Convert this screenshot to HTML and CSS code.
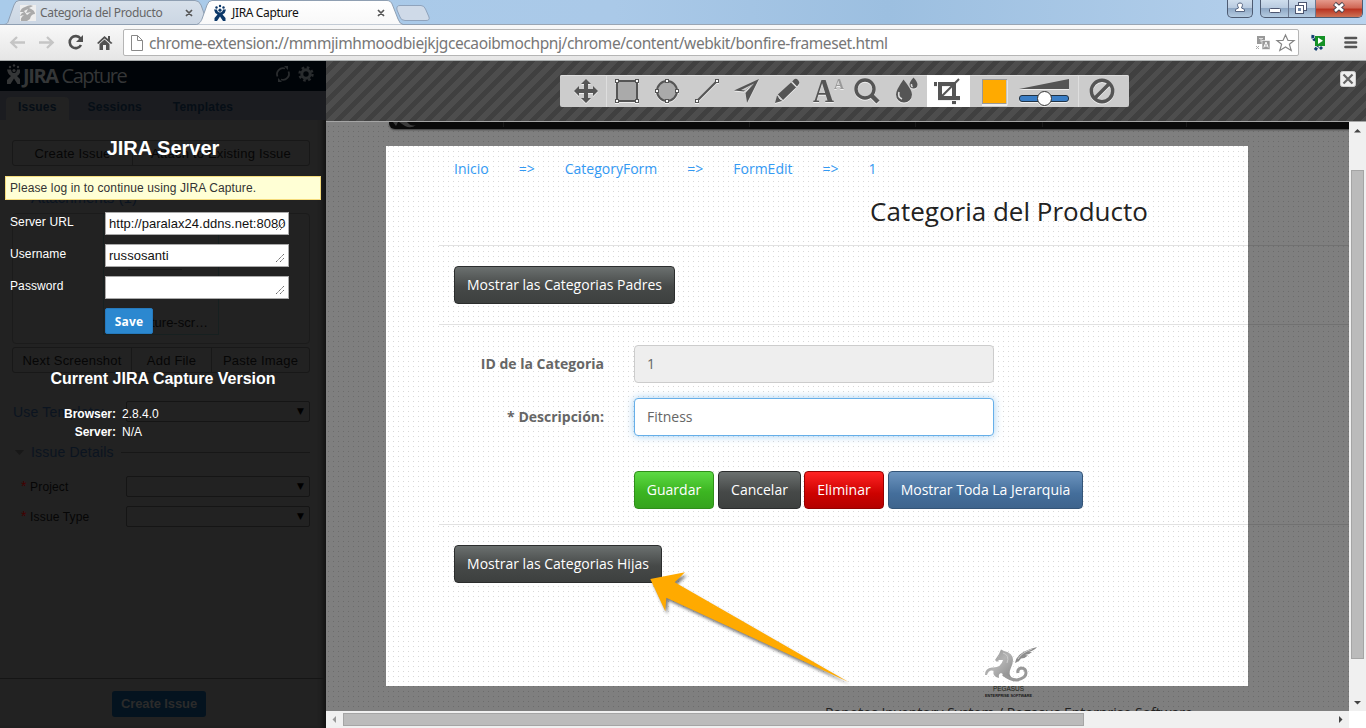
FILE: index.html
```
<!DOCTYPE html>
<html lang="es">
<head>
<meta charset="utf-8">
<title>JIRA Capture</title>
<link rel="stylesheet" href="styles.css">
</head>
<body>
<header class="browser">
  <div class="tabstrip">
    <svg class="tabshapes" width="440" height="25" viewBox="0 0 440 25">
      <defs>
        <linearGradient id="tab1" x2="0" y2="1"><stop offset="0" stop-color="#d7e0ea"/><stop offset="1" stop-color="#cbd6e3"/></linearGradient>
        <linearGradient id="tab2" x2="0" y2="1"><stop offset="0" stop-color="#fff"/><stop offset="1" stop-color="#f8f8f8"/></linearGradient>
      </defs>
      <path d="M4 24.500C8 24 8 22 9 19L14 5Q15.500 .5 19 .5H195Q199 .5 201 5L208 24.500Z" fill="url(#tab1)" stroke="#8f9fb2"/>
      <path d="M397 10Q396 5.500 400 5.500H421Q424 5.500 425.500 9L429 17Q430 20.500 426 20.500H405Q401 20.500 400 17Z" fill="#cfdae8" stroke="#8fa3bc"/>
      <path d="M195 25C200 24 201 21 202 19L207 5Q208.500 .5 212 .5H387Q391 .5 392.500 5L398 19Q399.500 24 404 25Z" fill="url(#tab2)" stroke="#8f9fb2"/>
      <path d="M0 24.500H196M403 24.500H440" stroke="#8f9fb2"/>
      <rect x="20" y="5" width="16" height="16" fill="#eee"/>
      <path d="M20 12Q21 8 25 7Q30 4 33 6L29 8Q35 10 35 14Q31 14 30 19L27 21H21Q20 18 24 15L20 16Q21 13 24 12Z" fill="#aaa"/><path d="M24 11L28 9L26 13L31 12L27 15Z" fill="#eee"/>
      <path d="M186 10l6 6m0-6l-6 6M378 10l6 6m0-6l-6 6" stroke="#555" stroke-width="1.700"/>
      <path d="M214 9.500H217Q217.500 12.500 220 12.500Q222.500 12.500 223 9.500H226Q225.500 13 222.500 14.500L225.500 18V21H223L220 16.500L217 21H214.500V18L217.500 14.500Q214.500 13 214 9.500Z" fill="#0b3768"/>
      <g fill="#0b3768"><circle cx="216.500" cy="7.500" r="1.200"/><circle cx="220" cy="6" r="1.200"/><circle cx="223.500" cy="7.500" r="1.200"/><circle cx="220" cy="10.200" r="1.600"/></g>
    </svg>
    <span class="tabname tabname-off">Categoria del Producto</span>
    <span class="tabname tabname-on">JIRA Capture</span>
    <div class="winbtns">
      <div class="wb wb-user"><svg width="26" height="17"><path d="M7.500 11.500V9.500L10.500 8Q8 3 12 3Q16 3 13.500 8L16.500 9.500V11.500Z" fill="#fff" stroke="#566581"/></svg></div>
      <div class="wb wb-group">
        <svg width="103" height="18"><rect x="8.500" y="8.500" width="11" height="4" rx="1" fill="#fff" stroke="#4d5670"/><path d="M27.500 0V17M54.500 0V17" stroke="#6b7890"/><rect x="37.500" y="2.500" width="8" height="8" fill="#fff" stroke="#4d5670"/><rect x="34.500" y="5.500" width="8" height="8" fill="#fff" stroke="#4d5670"/><rect x="37" y="8" width="3" height="3" fill="#7186a6"/><rect x="55" width="47" height="18" fill="url(#red)"/><defs><linearGradient id="red" x2="0" y2="1"><stop offset="0" stop-color="#e59a8c"/><stop offset=".45" stop-color="#cf6553"/><stop offset=".5" stop-color="#b93220"/><stop offset="1" stop-color="#cf7a5c"/></linearGradient></defs><path d="M73.500 3.500l9 8m0-8l-9 8" stroke="#4d4650" stroke-width="4.500"/><path d="M74 4l8 7m0-7l-8 7" stroke="#fff" stroke-width="2.600"/></svg>
      </div>
    </div>
  </div>
  <div class="addressbar">
    <svg class="navicons" width="123" height="36" viewBox="0 0 123 36">
      <g fill="none" stroke="#c5c5c5" stroke-width="2.300"><path d="M25 17.500H11M17 12L11.300 17.500L17 23M39 17.500H53M47 12L52.700 17.500L47 23"/></g>
      <path d="M80.500 13.500A6 6 0 1 0 81 20" fill="none" stroke="#505050" stroke-width="2.600"/><path d="M83 10V17H76Z" fill="#505050"/>
      <path d="M97 18L104.500 11L108 14V11H110V16L112.500 18L111 19L104.500 13.500L98.500 19ZM99.500 19L104.500 14.500L109.500 19V25H106V20H103V25H99.500Z" fill="#505050"/>
    </svg>
    <div class="urlbox">
      <svg width="20" height="26"><path d="M7.500 5.500H13.500L18.500 10.500V20.500H7.500ZM13.500 5.500V10.500H18.500" fill="none" stroke="#888"/></svg>
      <span class="url">chrome-extension://mmmjimhmoodbiejkjgcecaoibmochpnj/chrome/content/webkit/bonfire-frameset.html</span>
      <svg class="urlend" width="42" height="26" viewBox="0 0 42 26"><rect x="2" width="8" height="8" y="6" fill="#999"/><path d="M4 8.500H8M6 8.500V12" stroke="#ddd"/><rect x="7" y="10.500" width="8" height="9" fill="#999" stroke="#fff" stroke-width=".6"/><path d="M8.800 17.500L11 12L13.200 17.500M9.500 16H12.500" stroke="#fff" fill="none"/><path d="M1 16L4 19M1 19L4 16" stroke="#aaa"/><path d="M30.500 5L33 10.500H39L34.400 14.300L36.200 20.500L30.500 17L24.800 20.500L26.600 14.300L22 10.500H28Z" fill="#fff" stroke="#858585" stroke-width="1.200"/></svg>
    </div>
    <svg class="exticons" width="67" height="36" viewBox="0 0 67 36"><path d="M14 10Q13 15 17 15M21 22L23 24M16 25L19 21" stroke="#123e70" stroke-width="3" fill="none" stroke-dasharray="3 1"/><rect x="16" y="11" width="10" height="10" fill="#149126"/><path d="M19 12.500V19L24 15.700Z" fill="#fff"/><path d="M46.500 13H57M46.500 17.500H57M46.500 22H57" stroke="#555" stroke-width="2.700" stroke-linecap="round"/></svg>
  </div>
</header>
<main class="main">
  <aside class="side">
    <div class="side-head">
      <svg width="20" height="30" viewBox="0 0 20 30"><path d="M7 8.500H11Q11.500 12 14 12Q16.500 12 17 8.500H21Q20 13.500 17 15L21 19V23H17.500L14 17.500L10.500 23H7V19L11 15Q8 13.500 7 8.500Z" fill="#343637"/><g fill="#343637"><circle cx="10" cy="6" r="1.200"/><circle cx="14" cy="4.500" r="1.200"/><circle cx="18" cy="6" r="1.200"/><circle cx="14" cy="9.500" r="1.600"/></g></svg>
      <span class="brand"><b>JIRA</b> Capture</span>
      <svg class="headicons" width="42" height="20" viewBox="0 0 42 20"><g fill="none" stroke="#292c2e" stroke-width="1.800"><path d="M3.500 12.500A6 6 0 0 1 11 4.500M14.500 7.500A6 6 0 0 1 7 15.500"/><circle cx="32" cy="10" r="4.200" stroke-width="3"/><circle cx="32" cy="10" r="6.500" stroke-width="2.400" stroke-dasharray="2.600 2.500"/></g><path d="M10 2H14V6ZM4 14V18H8Z" fill="#292c2e"/></svg>
    </div>
    <nav class="side-tabs"><span class="st st-on">Issues</span><span class="st">Sessions</span><span class="st">Templates</span></nav>
    <div class="side-body">
      <div class="seg seg-top"><span>Create Issue</span><span>Attach to Existing Issue</span></div>
      <h4 class="attach">Attachments (1)</h4>
      <div class="files"><div class="file"><i></i><i></i><span>capture-scr…</span></div></div>
      <div class="seg seg-files"><span>Next Screenshot</span><span>Add File</span><span>Paste Image</span></div>
      <div class="template"><span>Use Template:</span><div class="sel">▼</div></div>
      <div class="details"><svg width="9" height="5"><path d="M0 0H9L4.500 5Z" fill="#181818"/></svg><span>Issue Details</span><hr></div>
      <div class="frow"><label><em>*</em> Project</label><div class="sel">▼</div></div>
      <div class="frow"><label><em>*</em> Issue Type</label><div class="sel">▼</div></div>
    </div>
    <div class="side-foot"><span class="create">Create Issue</span></div>
    <section class="login">
      <h1>JIRA Server</h1>
      <p class="notice">Please log in to continue using JIRA Capture.</p>
      <div class="lrow"><label>Server URL</label><div class="field">http://paralax24.ddns.net:8080<svg width="8" height="8"><path d="M0 8L8 0M4 8L8 4" stroke="#666" stroke-dasharray="1.500 .5"/></svg></div></div>
      <div class="lrow"><label>Username</label><div class="field">russosanti<svg width="8" height="8"><path d="M0 8L8 0M4 8L8 4" stroke="#666" stroke-dasharray="1.500 .5"/></svg></div></div>
      <div class="lrow"><label>Password</label><div class="field"><svg width="8" height="8"><path d="M0 8L8 0M4 8L8 4" stroke="#666" stroke-dasharray="1.500 .5"/></svg></div></div>
      <span class="save">Save</span>
      <h2>Current JIRA Capture Version</h2>
      <dl><dt>Browser:</dt><dd>2.8.4.0</dd><dt>Server:</dt><dd>N/A</dd></dl>
    </section>
  </aside>
  <div class="editor">
    <div class="stripes">
      <div class="tools">
        <div class="tool tool-move"><svg width="46" height="32"><path d="M26 4L31 9H28V14H33V11L38 16L33 21V18H28V23H31L26 28L21 23H24V18H19V21L14 16L19 11V14H24V9H21Z" fill="#555"/></svg></div>
        <div class="tool"><svg width="40" height="32"><rect x="10" y="6" width="20" height="20" fill="#aaa" stroke="#555" stroke-width="2"/><g fill="#fff" stroke="#555"><rect x="8.500" y="4.500" width="3" height="3"/><rect x="28.500" y="4.500" width="3" height="3"/><rect x="8.500" y="24.500" width="3" height="3"/><rect x="28.500" y="24.500" width="3" height="3"/></g></svg></div>
        <div class="tool"><svg width="40" height="32"><circle cx="20" cy="16" r="10" fill="#aaa" stroke="#555" stroke-width="2"/><g fill="#fff" stroke="#555"><rect x="18.500" y="4.500" width="3" height="3"/><rect x="18.500" y="24.500" width="3" height="3"/><rect x="8.500" y="14.500" width="3" height="3"/><rect x="28.500" y="14.500" width="3" height="3"/></g></svg></div>
        <div class="tool"><svg width="40" height="32"><path d="M10 26L30 6" stroke="#555" stroke-width="2.200"/><g fill="#fff" stroke="#555"><rect x="8.500" y="24.500" width="3" height="3"/><rect x="28.500" y="4.500" width="3" height="3"/></g></svg></div>
        <div class="tool"><svg width="40" height="32"><path d="M32 4L7 15.500L17 16.500L27 8.500L18.500 18L20 28Z" fill="#555"/><path d="M14 15L27 8.500L18 15.500Z" fill="#ccc"/></svg></div>
        <div class="tool"><svg width="40" height="32"><path d="M8 28L10 20.500L15 26ZM10.800 19.500L24 7.500L29 12.500L16 25ZM25.200 6.500L27 4.500Q29 3 31 5L32 6.500Q33 8 31.500 9.500L30 11.500Z" fill="#555"/><path d="M11.500 22.500L14 25" stroke="#ccc"/></svg></div>
        <div class="tool"><svg width="40" height="32"><text x="6" y="27" class="biga" textLength="21" lengthAdjust="spacingAndGlyphs">A</text><text x="27" y="14" class="smalla" textLength="10" lengthAdjust="spacingAndGlyphs">A</text></svg></div>
        <div class="tool"><svg width="40" height="32"><circle cx="18" cy="14" r="9" fill="none" stroke="#555" stroke-width="3.400"/><path d="M24 20L31 27" stroke="#555" stroke-width="4.500"/></svg></div>
        <div class="tool"><svg width="40" height="32"><path d="M16.500 4.500Q25 15 25 19.500A8 8 0 0 1 9 19.500Q9 15 16.500 4.500ZM26.500 2.500Q30.500 7 30.500 9.500A4 4 0 0 1 22.500 9.500Q22.500 7 26.500 2.500Z" fill="#555"/><path d="M12 17Q10.500 22 15 24M24.500 9Q24 11 25.500 12" stroke="#ddd" stroke-width="1.600" fill="none"/></svg></div>
        <div class="tool tool-crop"><svg width="43" height="32"><g fill="#555"><rect x="7" y="7" width="3" height="4"/><path d="M11 7H29V25H11ZM15 11V21H25V11Z" fill-rule="evenodd"/><rect x="11" y="21" width="22" height="4"/><rect x="25" y="26" width="4" height="3"/></g><path d="M15 21L32 4" stroke="#555" stroke-width="2"/></svg></div>
        <div class="tool tool-size"><svg width="108" height="32"><rect x="12.500" y="4.500" width="24" height="24" fill="#fa0" stroke="#999"/><path d="M37 5V29.500H12" stroke="#eee" fill="none"/><path d="M49 14L99 4V14Z" fill="#555"/><rect x="49.500" y="20.500" width="49" height="6" rx="2.500" fill="#3a7ec6" stroke="#234"/><circle cx="74.500" cy="23.500" r="7" fill="#fff" stroke="#333"/></svg></div>
        <div class="tool tool-stop"><svg width="50" height="32"><circle cx="23" cy="16" r="10.700" fill="none" stroke="#555" stroke-width="3.400"/><path d="M16 23L30 9" stroke="#555" stroke-width="3.600"/></svg></div>
      </div>
      <svg class="shut" width="17" height="17"><rect x=".5" y=".5" width="15" height="15" rx="2" fill="#eee" stroke="#ccc"/><path d="M3.500 3.500L12.500 12.500M12.500 3.500L3.500 12.500" stroke="#666" stroke-width="2.200"/></svg>
    </div>
    <div class="viewport">
      <div class="page">
        <div class="navbar"><svg width="960" height="7"><path d="M4 0L9 0L7 4ZM10 0H18Q22 5 27 3Q22 7 16 4Z" fill="#777"/><path d="M114.500 0V5M360.500 0V5M526.500 0V5M653.500 0V5M797.500 0V5" stroke="#333"/></svg></div>
        <div class="container">
          <div class="crumbs"><span>Inicio</span><span>=&gt;</span><span>CategoryForm</span><span>=&gt;</span><span>FormEdit</span><span>=&gt;</span><span>1</span></div>
          <h3>Categoria del Producto</h3>
          <div class="block"><span class="btn w221">Mostrar las Categorias Padres</span></div>
          <div class="block form">
            <div class="group"><label>ID de la Categoria</label><div class="input disabled">1</div></div>
            <div class="group"><label>* Descripción:</label><div class="input focus">Fitness</div></div>
            <div class="actions"><span class="btn green w80">Guardar</span><span class="btn w83">Cancelar</span><span class="btn red w80">Eliminar</span><span class="btn blue w195">Mostrar Toda La Jerarquia</span></div>
          </div>
          <div class="block"><span class="btn w208">Mostrar las Categorias Hijas</span></div>
          <footer class="foot">
            <svg width="56" height="54" viewBox="0 0 56 54"><defs><linearGradient id="peg" x2="1" y2="1"><stop offset="0" stop-color="#888"/><stop offset=".5" stop-color="#b4b4b4"/><stop offset="1" stop-color="#888"/></linearGradient></defs>
              <path d="M18 11L20 6.500L23 8Q32 10 32 17Q32 21 29.500 26Q27 31 31 35Q24 33 20 30Q17 31 18 35L15 34Q11 31 13 28Q8 26 6 32L4 32Q4 25 11 24.500Q20 25 22 17L18 17L16 19L14 17Z" fill="url(#peg)"/>
              <path d="M22 31Q29 37 36 37Q45 35 45 30Q45 25 40 25Q36 26 37 30" fill="none" stroke="#999" stroke-width="3"/>
              <path d="M34 20Q35 9 56 4Q54 7 48 9L51 9Q48 12 44 12L47 12.500Q44 15.500 40 15.500Q39 18 34 20Z" fill="#8c8c8c"/><path d="M37 16Q40 10 51 6M22 10Q29 12 26 20" stroke="#ccc" fill="none"/>
              <text x="12" y="48" textLength="31" class="peg1" lengthAdjust="spacingAndGlyphs">PEGASUS</text><text x="4" y="53.500" textLength="47" class="peg2" lengthAdjust="spacingAndGlyphs">ENTERPRISE SOFTWARE</text></svg>
            <p>Panotes Inventory System / Pegasus Enterprise Software</p>
          </footer>
        </div>
        <div class="cropbox"></div>
        <svg class="pointer" width="210" height="120" viewBox="0 0 210 120"><path d="M4.300 8L39 1.300L28.700 11.300L202.500 111L20.300 26.700L19.300 40.300Z" fill="#fa0"/></svg>
      </div>
      <div class="vbar"><svg width="17" height="17"><path d="M5 10.500H12L8.500 7Z" fill="#444"/></svg><i></i><svg width="17" height="17"><path d="M5 7H12L8.500 10.500Z" fill="#444"/></svg></div>
      <div class="hbar"><svg width="17" height="17"><path d="M10 5V12L6.500 8.500Z" fill="#999"/></svg><i></i><svg width="17" height="17"><path d="M7 5V12L10.500 8.500Z" fill="#444"/></svg></div>
    </div>
  </div>
</main>
</body>
</html>
```
FILE: styles.css
```
* { box-sizing: border-box; }
body { margin: 0; width: 1366px; height: 728px; overflow: hidden; font-family: "Liberation Sans", Arial, sans-serif; }
svg { display: block; flex: none; }
h1, h2, h3, h4, p, dl, dd { margin: 0; }

/* browser frame */
.browser { height: 61px; }
.tabstrip { position: relative; height: 25px; background: linear-gradient(90deg, #a9cbea, #aac9e8 45%, #9cbfe0 65%, #b9d3ee); border-bottom: 1px solid #9aa6b4; }
.tabname { position: absolute; top: 4px; font: 12px/18px "Noto Sans", sans-serif; white-space: nowrap; }
.tabname-off { left: 40px; color: #666; letter-spacing: -.33px; }
.tabname-on { left: 232px; color: #111; letter-spacing: -.35px; }
.winbtns { position: absolute; right: 3px; top: 0; display: flex; gap: 7px; }
.wb { height: 18px; border: 1px solid #4d5b72; border-top: 0; border-radius: 0 0 5px 5px; overflow: hidden; background: linear-gradient(#cfdeed, #b9cbe0 45%, #8fa8c5 50%, #b4cbe1); }
.wb-user { width: 26px; }
.wb-group { width: 103px; }
.addressbar { display: flex; height: 36px; background: linear-gradient(#f8f8f8, #e6e6e6); border-bottom: 1px solid #a9adad; }
.urlbox { display: flex; width: 1176px; height: 27px; margin-top: 4px; background: #fff; border: 1px solid #b5b5b5; border-radius: 2px; }
.url { margin-left: 5px; font: 15.500px/26px "Noto Sans", sans-serif; color: #777; letter-spacing: -.4px; white-space: nowrap; }
.urlend { margin-left: auto; margin-right: 1px; }

.main { display: flex; height: 667px; }

/* sidebar */
.side { position: relative; display: flex; flex-direction: column; width: 326px; background: #222; color: #060606; font-size: 13px; box-shadow: inset -6px 0 5px -3px #111; }
.side-head { display: flex; height: 30px; background: #000408; }
.brand { margin-left: 3px; font: 20px/30px "Open Sans", sans-serif; letter-spacing: -1.400px; color: #343637; }
.headicons { margin: 3px 10px 0 auto; }
.side-tabs { display: flex; height: 29px; padding: 6px 0 0 6px; background: #1b1c20; font-size: 12px; font-weight: bold; line-height: 21px; letter-spacing: .2px; color: #060e16; }
.st { padding: 0 12px; margin-right: 7px; }
.st-on { background: #222; border-radius: 4px 4px 0 0; }
.side-body { flex: 1; padding: 20px 16px 0 12px; }
.seg { display: flex; height: 26px; border: 1px solid #181818; border-radius: 3px; line-height: 25px; text-align: center; letter-spacing: .2px; white-space: nowrap; }
.seg span + span { border-left: 1px solid #181818; }
.seg-top span:first-child { width: 119px; }
.seg-top span:last-child { flex: 1; }
.attach { margin: 24px 0 0 19px; height: 23px; font: 15px/15px "Liberation Sans", sans-serif; color: #0b1420; }
.files { height: 131px; margin-bottom: 3px; border: 1px solid #1b1b1b; border-radius: 4px; }
.file { width: 116px; height: 121px; margin-left: 90px; border: 1px solid #172020; padding-top: 46px; }
.file i { display: block; width: 54px; height: 1px; margin: 8px 0 0 24px; background: #181818; }
.file span { display: block; margin: 36px 0 0 26px; line-height: 15px; }
.seg-files span:nth-child(1) { width: 118px; }
.seg-files span:nth-child(2) { width: 80px; }
.seg-files span:nth-child(3) { flex: 1; }
.template { display: flex; justify-content: space-between; align-items: center; height: 21px; margin: 28px 0 0 1px; font-size: 14px; letter-spacing: .2px; color: #0b1420; }
.sel { width: 184px; height: 21px; padding-right: 5px; border: 1px solid #151515; border-radius: 2px; text-align: right; font: 9px/18px "DejaVu Sans", sans-serif; color: #000; }
.details { display: flex; align-items: center; height: 20px; margin: 20px 0 9px 3px; font-size: 14px; color: #0b1420; }
.details span { margin: 0 7px 0 7px; letter-spacing: .2px; }
.details hr { flex: 1; margin: 0; border: 0; border-top: 1px solid #171717; }
.frow { display: flex; justify-content: space-between; align-items: center; height: 30px; margin: 0 0 0 9px; font-size: 12px; }
.frow label { letter-spacing: .15px; }
.frow em { font-style: normal; color: #400; font-size: 14px; }
.side-foot { display: flex; justify-content: center; height: 50px; padding: 12px 8px 0 0; border-top: 1px solid #151515; }
.create { width: 94px; height: 26px; border-radius: 3px; background: #04131f; color: #2b2b2b; font-weight: bold; line-height: 26px; text-align: center; white-space: nowrap; letter-spacing: -.1px; }

.login { position: absolute; inset: 0; padding: 74px 5px 0; color: #fff; }
.login h1 { font-size: 20px; line-height: 26px; text-align: center; }
.notice { height: 24px; margin: 15px 0 12px; padding-left: 4px; background: #ffffd5; border: 1px solid #f5dc7c; color: #333; font-size: 12px; line-height: 22px; letter-spacing: .12px; }
.lrow { display: flex; height: 32px; padding-left: 5px; font-size: 12px; }
.lrow label { width: 95px; padding-top: 3px; letter-spacing: .1px; }
.field { position: relative; width: 184px; height: 23px; padding-left: 3px; border: 1px solid #aaa; background: #fff; color: #111; font-size: 13px; line-height: 21px; white-space: nowrap; letter-spacing: .03px; }
.field svg { position: absolute; right: 4px; bottom: 4px; }
.save { display: block; width: 48px; height: 26px; margin-left: 100px; border-radius: 2px; background: #2b88d0; border: 1px solid #2579bd; font: bold 12px/25px "Noto Sans", sans-serif; text-align: center; letter-spacing: .2px; }
.login h2 { margin-top: 35px; font-size: 16px; line-height: 20px; text-align: center; }
.login dl { display: grid; grid-template-columns: 111px 1fr; column-gap: 6px; margin-top: 16px; font-size: 12px; line-height: 18px; }
.login dt { text-align: right; font-weight: bold; }

/* capture editor */
.editor { width: 1040px; }
.stripes { position: relative; height: 61px; padding: 14px 0 0 234px; border-bottom: 1px solid #a5a5a5; background: repeating-linear-gradient(135deg, #4d4d4d 0 5.300px, #404040 5.300px 10.600px); }
.tools { display: flex; width: 569px; height: 32px; background: #ccc; border-radius: 2px; overflow: hidden; box-shadow: inset 0 1px #ddd; }
.tool { width: 40px; }
.tool svg { filter: drop-shadow(0 1px 0 #eee); }
.tool-move { width: 47px; border-right: 1px solid #dedede; }
.tool-crop { width: 43px; background: #fff; }
.tool-size { width: 108px; }
.tool-stop { width: 51px; border-left: 1px solid #dedede; }
.biga { font: bold 34px "Liberation Serif", serif; fill: #555; }
.smalla { font: bold 15px "Liberation Serif", serif; fill: #999; }
.shut { position: absolute; right: 9px; top: 10px; }
.viewport { display: grid; grid-template: 589px 17px / 1023px 17px; background: #fff; }
.page { position: relative; overflow: hidden; padding-left: 63px; background: conic-gradient(from 90deg at 4px 4px, #d8d8d8 25%, #fff 0) -2px 0 / 5px 5px; font: 14px/20px "Open Sans", sans-serif; color: #666; }
.navbar { width: 1240px; height: 7px; background: #141414; border-radius: 0 0 0 6px; box-shadow: 0 1px 2px rgba(0,0,0,.5); }
.container { width: 1140px; margin-left: 50px; }
.crumbs { display: flex; gap: 30px; padding: 30px 15px 0; color: #3399f3; }
.container h3 { margin-top: 17px; height: 49px; font: 26px/30px "Open Sans", sans-serif; color: #222; text-align: center; }
.block { height: 79px; padding: 20px 15px 0; border-top: 1px solid #e2e2e2; }
.form { height: 200px; }
.btn { display: inline-block; height: 38px; border: 1px solid #2b2d2d; border-radius: 4px; background: linear-gradient(#6b706f, #464948 55%, #3d403f); color: #fff; line-height: 36px; text-align: center; white-space: nowrap; }
.green { background: linear-gradient(#5dda44, #3cb521 55%, #36a31e); border-color: #2f8f19; }
.red { background: linear-gradient(#ff2323, #cd0200 60%, #b30000); border-color: #950000; }
.blue { background: linear-gradient(#6c94be, #446e9b 60%, #3e648d); border-color: #345578; }
.w221 { width: 221px; } .w80 { width: 80px; } .w83 { width: 83px; } .w195 { width: 195px; } .w208 { width: 208px; }
.group { display: flex; gap: 30px; margin-bottom: 15px; }
.group label { width: 150px; text-align: right; font-weight: bold; line-height: 38px; }
.input { width: 360px; height: 38px; padding-left: 12px; border: 1px solid #ccc; border-radius: 4px; background: #fff; line-height: 36px; }
.disabled { background: #eee; }
.focus { border-color: #66afe9; box-shadow: 0 0 8px rgba(102,175,233,.6); }
.actions { display: flex; gap: 4px; margin-top: 35px; padding-left: 180px; }
.actions .red { margin-left: -1px; }
.foot { display: flex; flex-direction: column; align-items: center; padding-top: 40px; color: #444; white-space: nowrap; }
.foot p { line-height: 20px; margin-top: 6px; }
.peg1 { font: 7px "Liberation Sans", sans-serif; fill: #444733; }
.peg2 { font: bold 4px "Liberation Sans", sans-serif; fill: #333; }
.cropbox { position: absolute; left: 60px; top: 24px; width: 862px; height: 540px; box-shadow: 0 0 0 1200px rgba(0,0,0,.5); }
.pointer { position: absolute; left: 320px; top: 449px; filter: drop-shadow(2px 3px 1.500px rgba(0,0,0,.5)); }
.vbar, .hbar { display: flex; background: #f0f0f0; }
.vbar { flex-direction: column; }
.vbar i { width: 13px; height: 489px; margin: 31px 2px auto; background: #bbb; border: 1px solid #a5a5a5; }
.hbar i { width: 741px; height: 13px; margin: 2px auto 0 0; background: #bbb; border: 1px solid #a5a5a5; }
```
